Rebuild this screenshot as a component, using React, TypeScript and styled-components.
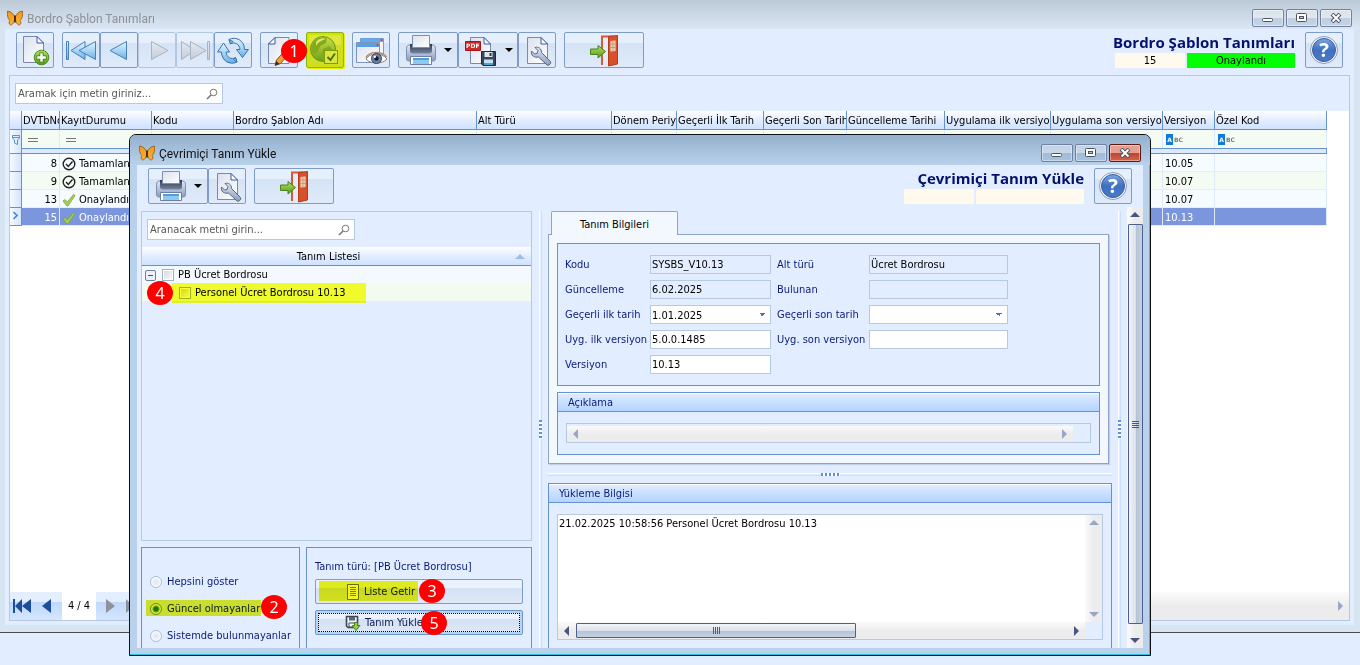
import React from "react";
import styled, { createGlobalStyle, css } from "styled-components";

const UI = '"DejaVu Sans Condensed", "DejaVu Sans", sans-serif';
const CAPTION = 'Roboto, "Open Sans", sans-serif';
const HEADING = '"Open Sans", "Noto Sans", sans-serif';
const TITLE = '"Noto Sans", "Open Sans", sans-serif';
const PALE = "#e2eeff";
const LINE = "#b5c9e4";
const BLUE = "#6693cf";
const NAVY = "#0b1a7c";

const Global = createGlobalStyle`
  *, *::before, *::after { box-sizing: border-box; }
  body { margin: 0; background: ${PALE}; font: 11px/18px ${UI}; color: #000; }
  button, input, select, textarea { font: inherit; color: inherit; margin: 0; border-radius: 0; }
`;

/* ---------- icons ---------- */

const Defs = styled.svg`
  position: absolute;
  width: 0;
  height: 0;
`;

const Gradients = () => (
  <Defs aria-hidden="true">
    <defs>
      <linearGradient id="page" x1="0" y1="0" x2="1" y2="1">
        <stop offset="0" stopColor="#dbe1ee" />
        <stop offset="1" stopColor="#ffffff" />
      </linearGradient>
      <linearGradient id="sky" x1="0" y1="0" x2="0" y2="1">
        <stop offset="0" stopColor="#e2f3fd" />
        <stop offset="0.5" stopColor="#a9d6f4" />
        <stop offset="1" stopColor="#69aee3" />
      </linearGradient>
      <linearGradient id="ash" x1="0" y1="0" x2="0" y2="1">
        <stop offset="0" stopColor="#e4eaf2" />
        <stop offset="1" stopColor="#c4ccd8" />
      </linearGradient>
      <linearGradient id="leaf" x1="0" y1="0" x2="0" y2="1">
        <stop offset="0" stopColor="#b5e060" />
        <stop offset="1" stopColor="#519c1c" />
      </linearGradient>
      <linearGradient id="lime" x1="0" y1="0" x2="0" y2="1">
        <stop offset="0" stopColor="#c6e24a" />
        <stop offset="1" stopColor="#6f9f14" />
      </linearGradient>
      <linearGradient id="steel" x1="0" y1="0" x2="0" y2="1">
        <stop offset="0" stopColor="#dfe7f5" />
        <stop offset="1" stopColor="#8c9cbd" />
      </linearGradient>
      <linearGradient id="ink" x1="0" y1="0" x2="0" y2="1">
        <stop offset="0" stopColor="#2d3852" />
        <stop offset="1" stopColor="#77859f" />
      </linearGradient>
      <linearGradient id="help" x1="0" y1="0" x2="0" y2="1">
        <stop offset="0" stopColor="#7ba7e2" />
        <stop offset="0.5" stopColor="#3f6fc0" />
        <stop offset="1" stopColor="#4a7cc9" />
      </linearGradient>
      <linearGradient id="wing" x1="0" y1="0" x2="0" y2="1">
        <stop offset="0" stopColor="#f09a1c" />
        <stop offset="1" stopColor="#fbb03a" />
      </linearGradient>
    </defs>
  </Defs>
);

const Butterfly = () => (
  <svg width="16" height="16" viewBox="0 0 16 16" aria-hidden="true">
    <path d="M.6 1C4 1.400 6.800 4 7.800 7.400L7.600 9.400C7 12.600 5.400 15.400 3.200 14.800 1.600 14 2 11.800 2.800 10.600.8 8.600-.2 4.800.6 1Z" fill="url(#wing)" stroke="#8a4a0a" strokeWidth=".7" />
    <path d="M15.400 1C12 1.400 9.200 4 8.200 7.400L8.400 9.400C9 12.600 10.600 15.400 12.800 14.800 14.400 14 14 11.800 13.200 10.600 15.200 8.600 16.200 4.800 15.400 1Z" fill="url(#wing)" stroke="#8a4a0a" strokeWidth=".7" />
    <path d="M8 5.500V12.500" stroke="#3b1d06" strokeWidth="1.600" />
  </svg>
);

const PageShape = () => (
  <>
    <path d="M6.500 3.500H20L26.500 10V29.500H6.500Z" fill="url(#page)" stroke="#7a89ab" />
    <path d="M20 3.500V10H26.500Z" fill="#fff" stroke="#3e57a5" strokeLinejoin="round" />
  </>
);

const NewIcon = () => (
  <svg width="30" height="32" viewBox="0 0 30 32" aria-hidden="true">
    <g transform="translate(-3 -1)"><PageShape /></g>
    <circle cx="21.500" cy="23.500" r="7.300" fill="url(#leaf)" stroke="#4a8a1c" />
    <path d="M21.500 18.500V28.500M16.500 23.500H26.500" stroke="#39780f" strokeWidth="4" />
    <path d="M21.500 19.200V27.800M17.200 23.500H25.800" stroke="#fff" strokeWidth="2.400" />
  </svg>
);

const FirstIcon = () => (
  <svg width="32" height="32" viewBox="0 0 32 32" aria-hidden="true" fill="url(#sky)" stroke="#4680bd" strokeLinejoin="round">
    <path d="M1.500 7.500H3.500V25.500H1.500Z" />
    <path d="M20 7.500V25.500L6 16.500Z" />
    <path d="M30.500 7.500V25.500L14 16.500Z" />
  </svg>
);
const PrevIcon = () => (
  <svg width="32" height="32" viewBox="0 0 32 32" aria-hidden="true">
    <path d="M23.500 7.500V25.500L7 16.500Z" fill="url(#sky)" stroke="#4680bd" strokeLinejoin="round" />
  </svg>
);
const NextIcon = () => (
  <svg width="32" height="32" viewBox="0 0 32 32" aria-hidden="true">
    <path d="M10.500 7.500V25.500L27 16.500Z" fill="url(#ash)" stroke="#a9b2c0" strokeLinejoin="round" />
  </svg>
);
const LastIcon = () => (
  <svg width="32" height="32" viewBox="0 0 32 32" aria-hidden="true" fill="url(#ash)" stroke="#a9b2c0" strokeLinejoin="round">
    <path d="M2.500 7.500V25.500L16 16.500Z" />
    <path d="M11.500 7.500V25.500L27 16.500Z" />
    <path d="M28.500 7.500H30.500V25.500H28.500Z" />
  </svg>
);

const RefreshIcon = () => (
  <svg width="34" height="32" viewBox="0 0 34 32" aria-hidden="true" fill="url(#sky)" stroke="#3573b3" strokeLinejoin="round">
    <path d="M13 5.500C20 2 28.500 6.500 28.500 15.500H32.500L26.500 23.500 20.500 15.500H24C23.500 10 18.500 7.500 14.500 10Z" />
    <path d="M21 28C14 31.500 5.500 27 5.500 18H1.500L7.500 9 13.500 18H10C10.500 23.500 15.500 26 19.500 23.500Z" />
    <path d="M13 5.500 17 7.500 14.500 10ZM21 28 17.500 25.500 19.500 23.500Z" fill="#8fc4ec" />
  </svg>
);

const EditIcon = () => (
  <svg width="32" height="32" viewBox="0 0 32 32" aria-hidden="true">
    <path d="M12 3.500H26V29.500H5.500V10Z" fill="url(#page)" stroke="#7a89ab" />
    <path d="M12 3.500V10H5.500Z" fill="#fff" stroke="#3e57a5" strokeLinejoin="round" />
    <path d="M12 31.500 13.500 26 26 12 29.500 15.500 17.500 29.500Z" fill="#f0a13c" stroke="#8b5414" />
    <path d="M12 31.500 13.200 27 16.500 30Z" fill="#2b2b2b" />
  </svg>
);

const GlobeIcon = () => (
  <svg width="32" height="32" viewBox="0 0 32 32" aria-hidden="true">
    <circle cx="14" cy="15" r="12.500" fill="url(#lime)" stroke="#6c971a" />
    <path d="M4 9C7 4 13 2 18 4L17 9 11 12 9 18 4 20C2 16 2 13 4 9ZM14 15 20 12 24 16 20 26 15 27 12 21Z" fill="#84a91a" />
    <path d="M7 8C10 4 14 3.500 17 5 13 6 9 8 7 12Z" fill="#e0ee6a" opacity=".9" />
    <rect x="15.500" y="16.500" width="13" height="13" fill="#dbe53c" stroke="#7d9a17" />
    <path d="M18.500 23 21.500 26 26 19.500" fill="none" stroke="#4f7410" strokeWidth="2" />
  </svg>
);

const PreviewIcon = () => (
  <svg width="34" height="32" viewBox="0 0 34 32" aria-hidden="true">
    <path d="M6.500 4.500H29.500V20H6.500Z" fill="#f3f8fe" stroke="#6a9fd8" />
    <path d="M7 5H29V8H7Z" fill="#67aaea" />
    <path d="M26.500 5H28.500V7H26.500Z" fill="#e2482d" />
    <path d="M2.500 8.500H25.500V28.500H2.500Z" fill="url(#page)" stroke="#7a94bd" />
    <path d="M3 9H25V13H3Z" fill="#5b9fe4" />
    <path d="M22.500 10H24.500V12H22.500Z" fill="#e2482d" />
    <path d="M12 25C15 19 28 18 33 25 28 30.500 17 30.500 12 25Z" fill="#fff" stroke="#8b7c82" />
    <path d="M12 23.500C16 17 28 17 32.500 23" fill="none" stroke="#b98a72" strokeWidth="1.600" />
    <circle cx="22.500" cy="24.500" r="5" fill="#6d83a6" stroke="#35465f" />
    <circle cx="22.500" cy="24.500" r="2.200" fill="#10182a" />
    <circle cx="20.800" cy="22.800" r="1.200" fill="#fff" />
  </svg>
);

const PrinterIcon = () => (
  <svg width="32" height="32" viewBox="0 0 32 32" aria-hidden="true">
    <path d="M1.500 14.500C1.500 12 3 11 5 11H27C29 11 30.500 12 30.500 14.500V25C30.500 26 29.500 27 28.500 27H3.500C2.500 27 1.500 26 1.500 25Z" fill="url(#steel)" stroke="#7f8fb2" />
    <path d="M5 10H27V17C27 18.500 26 19.500 24 19.500H8C6 19.500 5 18.500 5 17Z" fill="url(#ink)" />
    <path d="M7.500 1.500H24.500V13.500H7.500Z" fill="url(#page)" stroke="#7f8fb4" />
    <path d="M5.500 22.500H26.500V30.500H5.500Z" fill="#fff" stroke="#6f7fa3" />
    <path d="M8 24H24V30H8Z" fill="#8ccaf4" />
    <path d="M8 24H24V26H8Z" fill="#4f9edc" />
  </svg>
);

const PdfLabel = styled.text`
  font: bold 6px/8px "DejaVu Sans", sans-serif;
  fill: #fff;
`;

const PdfIcon = () => (
  <svg width="34" height="32" viewBox="0 0 34 32" aria-hidden="true">
    <PageShape />
    <path d="M1.500 7.500H16.500V16.500H1.500Z" fill="#cf2a2a" stroke="#a51515" />
    <PdfLabel x="2" y="14">PDF</PdfLabel>
    <path d="M17.500 17.500H31.500V31.500H19L17.500 30Z" fill="#3a465c" stroke="#1f2938" />
    <path d="M20.500 18H28.500V23H20.500Z" fill="#dfe5ef" />
    <path d="M25.500 19H27.500V22H25.500Z" fill="#2c3648" />
    <path d="M20 25.500H29V31H20Z" fill="#c3e2f7" />
    <path d="M20 29H29V31H20Z" fill="#4fa4de" />
  </svg>
);

const SettingsIcon = () => (
  <svg width="32" height="32" viewBox="0 0 32 32" aria-hidden="true">
    <PageShape />
    <path d="M14 13.500C17.500 12.500 20.500 14.500 20.500 18.500L29.500 27.500C30.500 29.500 28 32 26 31L17.500 23C13.500 24 9.500 21.500 10.500 17L13.500 20 16 19.500 17 16.500Z" fill="url(#steel)" stroke="#58657f" strokeLinejoin="round" />
  </svg>
);

const DoorIcon = () => (
  <svg width="32" height="34" viewBox="0 0 32 34" aria-hidden="true">
    <path d="M14.500 3.500H25V31H14.500Z" fill="#e3edfb" />
    <path d="M14 32V3.500H25" fill="none" stroke="#d95a34" strokeWidth="2" />
    <path d="M20.500 3.500 29.500 2.500V31L20.500 33Z" fill="#d84f29" stroke="#b23c18" />
    <path d="M22.500 8 27.500 7.500V18L22.500 18.500Z" fill="#f6e6d2" />
    <path d="M24.200 8V18M25.900 8V18M22.500 11H27.500M22.500 14.500H27.500" stroke="#c49068" strokeWidth=".8" />
    <path d="M2.500 16H10V12.500L17.500 18.500 10 25V21.500H2.500Z" fill="url(#leaf)" stroke="#47841b" strokeLinejoin="round" />
  </svg>
);

const HelpMark = styled.text`
  font: bold 20px/22px ${TITLE};
  fill: #fff;
  text-anchor: middle;
`;

const HelpIcon = () => (
  <svg width="30" height="30" viewBox="0 0 30 30" aria-hidden="true">
    <circle cx="15" cy="15" r="13.500" fill="#f4f7fc" stroke="#8b9abb" />
    <circle cx="15" cy="15" r="11.500" fill="url(#help)" stroke="#3a5c9e" />
    <HelpMark x="15" y="22">?</HelpMark>
  </svg>
);

const SearchIcon = () => (
  <svg width="12" height="12" viewBox="0 0 12 12" aria-hidden="true" fill="none" stroke="#777">
    <circle cx="7.500" cy="4.500" r="3.300" />
    <path d="M5 7 1 11" strokeWidth="1.600" />
  </svg>
);

const DoneIcon = () => (
  <svg width="14" height="14" viewBox="0 0 14 14" aria-hidden="true" fill="none" stroke="#222">
    <circle cx="7" cy="7" r="5.800" strokeWidth="1.400" />
    <path d="M4 7 6.300 9.500 10.500 4.500" strokeWidth="1.400" />
  </svg>
);

const TickIcon = () => (
  <svg width="14" height="14" viewBox="0 0 14 14" aria-hidden="true">
    <path d="M1 8 3 6.500 5.300 9 11.500 1.500 13 2.500 6 13H5Z" fill="#a3cf4e" stroke="#739f2b" strokeWidth=".7" />
  </svg>
);

const FunnelIcon = () => (
  <svg width="8" height="10" viewBox="0 0 8 10" aria-hidden="true" fill="none" stroke="#5b93d8">
    <path d="M.5.500H7.500V3L5.500 5V9.500L2.500 8V5L.5 3ZM.5 2.500H7.500" />
  </svg>
);

const ListIcon = () => (
  <svg width="14" height="16" viewBox="0 0 14 16" aria-hidden="true">
    <path d="M1.500.500H12.500V15.500H1.500Z" fill="#fff" stroke="#6b7280" />
    <path d="M4 3.500H10M4 5.500H10M4 7.500H10M4 9.500H10M4 11.500H10" stroke="#7d8590" />
  </svg>
);

const SaveIcon = () => (
  <svg width="16" height="16" viewBox="0 0 16 16" aria-hidden="true">
    <path d="M1.500 1.500H12.500V12.500H3L1.500 11Z" fill="#eef3fa" stroke="#3b4557" strokeWidth="1.600" />
    <path d="M4 2H10V5.500H4Z" fill="#596579" />
    <path d="M4 8H10V12H4Z" fill="#fff" stroke="#3b4557" />
    <path d="M9.500 7.500H12.500V10.500H15L11 15.500 7 10.500H9.500Z" fill="#8bd045" stroke="#4a861c" />
  </svg>
);

const Arrow = ({ dir, color = "#47567f" }: { dir: "up" | "down" | "left" | "right"; color?: string }) => {
  const paths = {
    up: "M0 7 5 2 10 7Z",
    down: "M0 3 5 8 10 3Z",
    left: "M7 0 2 5 7 10Z",
    right: "M3 0 8 5 3 10Z",
  };
  return (
    <svg width="10" height="10" viewBox="0 0 10 10" aria-hidden="true">
      <path d={paths[dir]} fill={color} />
    </svg>
  );
};

/* ---------- windows ---------- */

const Desktop = styled.div`
  position: relative;
  display: flex;
  flex-direction: column;
  min-height: 100vh;
  padding-bottom: 32px;
`;

const MainWindow = styled.main`
  flex: 1;
  display: flex;
  flex-direction: column;
  border-bottom: 1px solid #4a4a50;
  background: #d7e4f1;
`;

const Dialog = styled.section`
  position: absolute;
  inset: 134px 209px 9px 129px;
  display: flex;
  flex-direction: column;
  overflow: hidden;
  border: 1px solid #111;
  border-radius: 7px 7px 0 0;
  background: #b9d1ea;
  box-shadow: inset -1px -1px 0 #25c4e2;
`;

const TitleBar = styled.header<{ $active?: boolean }>`
  display: flex;
  align-items: center;
  flex: none;
  gap: 4px;
  height: ${(p) => (p.$active ? 30 : 29)}px;
  padding: 6px ${(p) => (p.$active ? 9 : 8)}px 0 ${(p) => (p.$active ? 9 : 7)}px;
  font: 12px/18px ${CAPTION};
  color: ${(p) => (p.$active ? "#111" : "#8d9196")};
  background: ${(p) =>
    p.$active
      ? "linear-gradient(#94b0ce, #b9d1ea)"
      : "linear-gradient(#bccad8, #dae6f3)"};
`;

const WindowTitle = styled.h1`
  flex: 1;
  margin: 0;
  padding-top: 2px;
  font: inherit;
`;

const CaptionButtons = styled.div`
  display: flex;
  gap: 2px;
`;

const CaptionButton = styled.button<{ $danger?: boolean }>`
  display: grid;
  place-items: center;
  width: 32px;
  height: 18px;
  padding: 0;
  border: 1px solid ${(p) => (p.$danger ? "#5c1a16" : "#6f83a0")};
  border-radius: 2px;
  background: ${(p) =>
    p.$danger
      ? "linear-gradient(#e4a093 0 50%, #bf4430 50%, #d4644c)"
      : "linear-gradient(rgba(255,255,255,.35) 0 50%, rgba(120,145,180,.18) 50%)"};
  box-shadow: inset 0 0 0 1px rgba(255, 255, 255, 0.4);
`;

const Captions = ({ danger }: { danger?: boolean }) => (
  <CaptionButtons>
    <CaptionButton aria-label="Simge durumuna küçült">
      <svg width="12" height="10" viewBox="0 0 12 10"><rect x=".5" y="5.500" width="10" height="3" rx="1" fill="#fff" stroke="#4b5260" /></svg>
    </CaptionButton>
    <CaptionButton aria-label="Ekranı kapla">
      <svg width="12" height="10" viewBox="0 0 12 10"><rect x=".5" y=".5" width="10" height="8" rx="1" fill="#fff" stroke="#4b5260" /><rect x="3.500" y="3.500" width="4" height="2" fill="#b4c4d8" stroke="#4b5260" /></svg>
    </CaptionButton>
    <CaptionButton $danger={danger} aria-label="Kapat">
      <svg width="12" height="10" viewBox="0 0 12 10"><path d="M2 1 10 9M10 1 2 9" stroke="#4b5260" strokeWidth="4" /><path d="M2.500 1.500 9.500 8.500M9.500 1.500 2.500 8.500" stroke="#fff" strokeWidth="2" /></svg>
    </CaptionButton>
  </CaptionButtons>
);

const WindowBody = styled.div<{ $dialog?: boolean }>`
  flex: 1;
  display: flex;
  flex-direction: column;
  min-height: 0;
  margin: ${(p) => (p.$dialog ? "0 7px 7px" : "0 6px 7px 5px")};
  background: ${PALE};
`;

/* ---------- toolbar ---------- */

const Toolbar = styled.div<{ $tall?: boolean }>`
  display: flex;
  flex: none;
  gap: 8px;
  height: ${(p) => (p.$tall ? 46 : 42)}px;
  padding: 3px 11px 0;
`;

const ToolGroup = styled.div`
  display: flex;
`;

const ToolButton = styled.button<{ $w?: number; $marked?: boolean }>`
  position: relative;
  display: flex;
  align-items: center;
  justify-content: center;
  gap: 7px;
  width: ${(p) => p.$w ?? 38}px;
  height: 36px;
  padding: 0;
  border: 1px solid ${(p) => (p.$marked ? "#8fae1f" : "#7e9cc6")};
  border-radius: 2px;
  background: ${(p) =>
    p.$marked
      ? "linear-gradient(#dfe83a 0 35%, #cfdc28 35%)"
      : "linear-gradient(#e6f0fc 0 30%, #d4e3f5 30%, #e0ebfa)"};
  ${(p) => p.$marked && css`box-shadow: inset 0 0 0 2px #d3e300, 1px 1px 0 #e6ee10;`}
  &:disabled { border-color: #b4c7e0; }
`;

const Caret = styled.span`
  border: 4px solid transparent;
  border-top-color: #000;
  border-bottom: 0;
`;

const Heading = styled.div`
  display: flex;
  flex-direction: column;
  align-items: flex-end;
  margin: 0 2px 0 auto;
`;

const HeadingTitle = styled.h2`
  margin: 0;
  font: bold 15px/21px ${HEADING};
  color: #04116e;
`;

const HeadingCells = styled.div`
  display: flex;
  gap: 2px;
`;

const HeadingCell = styled.span<{ $wide?: boolean; $ok?: boolean }>`
  width: ${(p) => (p.$wide ? 108 : 70)}px;
  height: 15px;
  line-height: 16px;
  text-align: center;
  background: ${(p) => (p.$ok ? "#00ff00" : "#fff9ee")};
`;

const Badge = styled.b<{ $x: number; $y: number }>`
  position: absolute;
  z-index: 2;
  left: ${(p) => p.$x}px;
  top: ${(p) => p.$y}px;
  width: 26px;
  height: 24px;
  border-radius: 50%;
  background: #f00;
  color: #fff;
  font: 16px/24px ${TITLE};
  text-align: center;
`;

const Highlight = styled.span<{ $inset: string; $tone?: string }>`
  position: absolute;
  z-index: 1;
  inset: ${(p) => p.$inset};
  background: ${(p) => p.$tone ?? "#fdff30"};
  mix-blend-mode: multiply;
  pointer-events: none;
`;

/* ---------- shared fields ---------- */

const SearchBox = styled.label`
  display: flex;
  align-items: center;
  flex: none;
  width: 208px;
  height: 21px;
  padding: 0 4px 0 2px;
  border: 1px solid ${LINE};
  background: #fff;
`;

const SearchInput = styled.input`
  flex: 1;
  min-width: 0;
  padding: 0;
  border: 0;
  outline: 0;
  background: none;
  &::placeholder { color: #555; opacity: 1; }
`;

/* ---------- main grid ---------- */

const Panel = styled.div<{ $main?: boolean }>`
  flex: 1;
  display: flex;
  flex-direction: column;
  min-height: 0;
  border: 1px solid ${LINE};
  ${(p) => p.$main && css`margin: 0 4px 4px;`}
`;

const SearchRow = styled.div`
  flex: none;
  padding: 7px 5px;
`;

const GridArea = styled.div`
  flex: 1;
  min-height: 0;
  overflow: hidden;
  background: #fff;
`;

const Table = styled.table`
  width: 1317px;
  table-layout: fixed;
  border-collapse: separate;
  border-spacing: 0;
`;

const clip = css`
  overflow: hidden;
  white-space: nowrap;
  text-align: left;
`;

const HeadCell = styled.th`
  ${clip}
  height: 19px;
  padding: 2px 0 0 1px;
  border-right: 1px solid ${BLUE};
  border-bottom: 1px solid ${BLUE};
  background: linear-gradient(#fdfeff, #deebff 60%, #cfe2ff);
  font-weight: normal;
  line-height: 16px;
`;

const FilterCell = styled.td`
  ${clip}
  height: 18px;
  padding: 0 0 0 3px;
  border-right: 1px solid #dfeaf8;
  background: #f3fbf3;
  line-height: 17px;
  color: #666;
`;

const StripCell = styled.td`
  height: 6px;
  padding: 0;
  border: 1px solid ${BLUE};
  border-left: 0;
  background: #dbe9ff;
`;

const DataRow = styled.tr<{ $tone: "a" | "b" | "selected" }>`
  background: ${(p) => ({ a: "#f6fbff", b: "#f3fbf3", selected: "#7b96dd" })[p.$tone]};
  color: ${(p) => (p.$tone === "selected" ? "#fff" : "#000")};
`;

const DataCell = styled.td<{ $num?: boolean }>`
  ${clip}
  height: 18px;
  padding: 2px 2px 0;
  border-right: 1px solid #dfeaf8;
  border-bottom: 1px solid #e3eefa;
  line-height: 15px;
  ${(p) => p.$num && css`text-align: right;`}
`;

const MarkCell = styled.td`
  ${clip}
  padding: 0 0 0 2px;
  border-right: 1px solid ${BLUE};
  border-bottom: 1px solid ${BLUE};
  background: linear-gradient(90deg, #f6faff, #d3e4ff);
  color: #3f83d8;
  line-height: 16px;
`;

const Status = styled.span`
  display: flex;
  align-items: center;
  gap: 3px;
`;

const Abc = styled.span`
  display: flex;
  align-items: center;
  font: bold 6px/11px "DejaVu Sans", sans-serif;
  color: #7a7a7a;
  & > b {
    width: 7px;
    margin-right: 1px;
    background: #0f7ad8;
    color: #fff;
    text-align: center;
  }
`;

const columns: [string, number][] = [
  ["DVTbNo", 38],
  ["KayıtDurumu", 92],
  ["Kodu", 82],
  ["Bordro Şablon Adı", 243],
  ["Alt Türü", 135],
  ["Dönem Periyodu", 65],
  ["Geçerli İlk Tarih", 87],
  ["Geçerli Son Tarih", 83],
  ["Güncelleme Tarihi", 98],
  ["Uygulama ilk versiyon", 106],
  ["Uygulama son versiyon", 112],
  ["Versiyon", 52],
  ["Özel Kod", 112],
];

const records = [
  { no: 8, state: "Tamamlandı", version: "10.05" },
  { no: 9, state: "Tamamlandı", version: "10.07" },
  { no: 13, state: "Onaylandı", version: "10.07" },
  { no: 15, state: "Onaylandı", version: "10.13" },
];

const Navigator = styled.div`
  display: flex;
  flex: none;
  height: 28px;
`;

const NavPart = styled.div<{ $plain?: boolean }>`
  display: flex;
  align-items: center;
  justify-content: ${(p) => (p.$plain ? "center" : "flex-start")};
  gap: 10px;
  width: ${(p) => (p.$plain ? 34 : 52)}px;
  padding-left: ${(p) => (p.$plain ? 0 : 2)}px;
  background: ${(p) =>
    p.$plain ? "#fff" : "linear-gradient(#e3eeff 0 35%, #c0d8fb 35%, #d5e6ff)"};
`;

const NavButton = styled.button`
  display: flex;
  padding: 0;
  border: 0;
  background: none;
`;

/* ---------- scroll bars ---------- */

const Bar = styled.div<{ $vertical?: boolean }>`
  display: flex;
  flex: 1;
  flex-direction: ${(p) => (p.$vertical ? "column" : "row")};
  align-items: center;
  justify-content: space-between;
  padding: ${(p) => (p.$vertical ? "3px 0" : "0 4px")};
  background: linear-gradient(${(p) => (p.$vertical ? "90deg" : "180deg")}, #fbfbfb, #ececec 50%);
`;

const Thumb = styled.div<{ $vertical?: boolean }>`
  display: grid;
  place-items: center;
  ${(p) =>
    p.$vertical
      ? css`width: 15px; flex: 1; margin: 4px 0 11px;`
      : css`height: 15px; width: 280px; margin: 0 auto 0 4px;`}
  border: 1px solid #4d5f8f;
  border-radius: 1px;
  background: linear-gradient(
    ${(p) => (p.$vertical ? "90deg" : "180deg")},
    #f2f4f8,
    #dce2ea 50%,
    #b3c1d4 50%,
    #c6d1e0
  );
`;

const Grip = styled.span<{ $vertical?: boolean }>`
  width: 7px;
  height: 7px;
  background: repeating-linear-gradient(
    ${(p) => (p.$vertical ? "180deg" : "90deg")},
    #4a5a83 0 1px,
    transparent 1px 2px
  );
`;

/* ---------- dialog content ---------- */

const DialogMain = styled.div`
  flex: 1;
  display: flex;
  min-height: 0;
`;

const Columns = styled.div`
  flex: 1;
  display: flex;
  gap: 6px;
  min-width: 0;
  padding: 4px 6px 0 4px;
`;

const LeftColumn = styled.div`
  display: flex;
  flex: none;
  flex-direction: column;
  gap: 6px;
  width: 391px;
  margin-right: 1px;
`;

const RightColumn = styled.div`
  display: flex;
  flex: 1;
  flex-direction: column;
  min-width: 0;
`;

const Splitter = styled.div<{ $vertical?: boolean }>`
  display: flex;
  flex: none;
  align-items: center;
  justify-content: center;
  ${(p) => (p.$vertical ? css`width: 3px;` : css`height: 3px; margin: 9px 0 7px;`)}
  background: linear-gradient(${(p) => (p.$vertical ? "90deg" : "180deg")}, #fff 0 1px, ${PALE} 1px 2px, #c9dfff 2px);
  &::after {
    content: "";
    ${(p) => (p.$vertical ? css`width: 3px; height: 19px;` : css`width: 19px; height: 3px;`)}
    background: repeating-linear-gradient(
      ${(p) => (p.$vertical ? "180deg" : "90deg")},
      #5c92d8 0 2px,
      #fff 2px 4px
    );
  }
`;

const ScrollColumn = styled.div`
  display: flex;
  width: 16px;
`;

const TreeHeader = styled.div`
  display: flex;
  align-items: center;
  flex: none;
  height: 19px;
  padding: 2px 6px 0 0;
  border-bottom: 1px solid ${BLUE};
  background: linear-gradient(#fdfeff, #deebff 60%, #cfe2ff);
  & > span { flex: 1; text-align: center; }
`;

const TreeRow = styled.div<{ $level: number }>`
  position: relative;
  display: flex;
  align-items: center;
  flex: none;
  gap: 3px;
  height: ${(p) => (p.$level ? 17 : 18)}px;
  padding-left: ${(p) => (p.$level ? 37 : 3)}px;
  background: ${(p) => (p.$level ? "#f2fbf0" : "#f3f9ff")};
`;

const Expander = styled.button`
  width: 11px;
  height: 11px;
  margin-right: 3px;
  padding: 0;
  border: 1px solid #6d7f9c;
  border-radius: 2px;
  background: linear-gradient(#3d4f75, #3d4f75) center / 5px 1px no-repeat, #eef3fb;
`;

const CheckLabel = styled.label`
  display: flex;
  align-items: center;
  gap: 4px;
`;

const Check = styled.input`
  appearance: none;
  width: 12px;
  height: 12px;
  border: 1px solid #9fb0c8;
  background: linear-gradient(135deg, #cfd4da, #fff);
  box-shadow: inset 0 0 0 1px #fff;
`;

const Boxes = styled.div`
  display: flex;
  flex: none;
  gap: 6px;
  height: 101px;
`;

const Box = styled.div<{ $w?: number }>`
  position: relative;
  display: flex;
  flex-direction: column;
  ${(p) => (p.$w ? css`width: ${p.$w}px;` : css`flex: 1;`)}
  padding: ${(p) => (p.$w ? "24px 4px 0 8px" : "10px 8px 0")};
  border: 1px solid ${BLUE};
  border-bottom: 0;
  color: ${NAVY};
  line-height: 17px;
`;

const RadioLabel = styled.label`
  position: relative;
  display: flex;
  align-items: center;
  flex: none;
  gap: 5px;
  height: 19px;
  margin-bottom: 8px;
`;

const Radio = styled.input`
  appearance: none;
  width: 12px;
  height: 12px;
  border: 1px solid #a8bcd8;
  border-radius: 50%;
  background: radial-gradient(#dfe6f0, #fff);
  box-shadow: inset 0 0 0 1px #fff;
  &:checked { background: radial-gradient(#1e7d1c 0 2px, #e6f4e0 4px); border-color: #7b93a0; }
`;

const ActionButton = styled.button<{ $focused?: boolean }>`
  position: relative;
  display: flex;
  align-items: center;
  flex: none;
  gap: 4px;
  width: 100%;
  height: 25px;
  margin-top: ${(p) => (p.$focused ? 6 : 4)}px;
  padding: 0 0 0 ${(p) => (p.$focused ? 29 : 30)}px;
  border: 1px solid #7e9cc6;
  border-radius: 2px;
  background: linear-gradient(#eaf2fd 0 35%, #d3e1f3 35%, #dfe9f7);
  color: #101a4c;
  ${(p) =>
    p.$focused &&
    css`
      border-color: #6c95c8;
      box-shadow: inset 0 0 0 2px #b7d3f2;
      outline: 1px dotted #000;
      outline-offset: -4px;
    `}
`;

const Tab = styled.button`
  position: relative;
  z-index: 1;
  flex: none;
  width: 127px;
  height: 24px;
  margin: 0 0 -1px 3px;
  padding: 2px 0 0;
  border: 1px solid #8fa3cc;
  border-bottom: 0;
  border-radius: 2px 2px 0 0;
  background: #f3f8ff;
`;

const TabBody = styled.div`
  display: flex;
  flex: none;
  flex-direction: column;
  gap: 6px;
  margin-right: 3px;
  padding: 8px;
  border: 1px solid #8fa3cc;
  background: #f3f8ff;
  box-shadow: 1px 1px 1px #c0cfe6;
`;

const Group = styled.section<{ $open?: boolean }>`
  display: flex;
  flex-direction: column;
  min-height: 0;
  border: 1px solid ${BLUE};
  background: ${PALE};
  ${(p) => p.$open && css`flex: 1; border-bottom: 0;`}
`;

const GroupTitle = styled.h3`
  flex: none;
  height: 19px;
  margin: 0;
  padding-left: 10px;
  border-bottom: 1px solid ${BLUE};
  background: linear-gradient(#fff 0 1px, #deecff 1px, #b3d3ff);
  color: ${NAVY};
  font: inherit;
  line-height: 20px;
`;

const GroupBody = styled.div`
  display: flex;
  flex: 1;
  flex-direction: column;
  min-height: 0;
  padding: 11px 8px 8px;
`;

const ScrollBox = styled.div`
  display: flex;
  height: 20px;
  margin-bottom: 3px;
  padding: 2px 17px 0 0;
  border: 1px solid ${LINE};
`;

const Form = styled.div`
  display: grid;
  grid-template-columns: 79px 121px 86px 139px;
  gap: 6px;
  padding: 11px 7px;
  color: ${NAVY};
  line-height: 19px;
  white-space: nowrap;
`;

const field = css<{ $locked?: boolean }>`
  width: 100%;
  height: 19px;
  padding: 0 1px;
  border: 1px solid ${LINE};
  outline: 0;
  background-color: ${(p) => (p.$locked ? PALE : "#fff")};
  color: #000;
`;

const Field = styled.input<{ $locked?: boolean }>`
  ${field}
`;

const SelectField = styled.select<{ $locked?: boolean }>`
  ${field}
  appearance: none;
  background-image: linear-gradient(45deg, transparent 50%, #4777ad 50%), linear-gradient(-45deg, transparent 50%, #4777ad 50%);
  background-position: right 8px top 7px, right 5px top 7px;
  background-size: 3px 3px;
  background-repeat: no-repeat;
`;

const Memo = styled.div`
  flex: 1;
  display: flex;
  flex-direction: column;
  min-height: 0;
  border: 1px solid ${LINE};
`;

const MemoRow = styled.div<{ $grow?: boolean }>`
  display: flex;
  ${(p) => (p.$grow ? css`flex: 1; min-height: 0;` : css`height: 17px; flex: none; padding-right: 17px;`)}
`;

const MemoText = styled.textarea`
  flex: 1;
  min-width: 0;
  padding: 0 1px;
  border: 0;
  outline: 0;
  resize: none;
  overflow: hidden;
  white-space: pre;
  background: #fff;
`;

const MemoScroll = styled.div`
  display: flex;
  width: 17px;
`;

const StatusText = ({ state }: { state: string }) => (
  <Status>
    {state === "Onaylandı" ? <TickIcon /> : <DoneIcon />}
    {state}
  </Status>
);

const AbcMark = () => (
  <Abc>
    <b>A</b>BC
  </Abc>
);

const RecordGrid = () => (
  <Table>
    <colgroup>
      <col style={{ width: 12 }} />
      {columns.map(([name, width]) => (
        <col key={name} style={{ width }} />
      ))}
    </colgroup>
    <thead>
      <tr>
        <HeadCell aria-label="Satır" />
        {columns.map(([name]) => (
          <HeadCell key={name} scope="col">{name}</HeadCell>
        ))}
      </tr>
    </thead>
    <tbody>
      <tr>
        <MarkCell rowSpan={2}><FunnelIcon /></MarkCell>
        {columns.map(([name], i) => (
          <FilterCell key={name}>
            {i < 2 && (
              <svg width="14" height="5" viewBox="0 0 14 5" aria-hidden="true">
                <path d="M3 .5H13M3 3.500H13" stroke="#777" />
              </svg>
            )}
            {i > 10 && <AbcMark />}
          </FilterCell>
        ))}
      </tr>
      <tr>
        <StripCell colSpan={13} />
      </tr>
      {records.map((r, i) => (
        <DataRow key={r.no} $tone={i === 3 ? "selected" : i % 2 ? "b" : "a"}>
          <MarkCell>
            {i === 3 && (
              <svg width="7" height="9" viewBox="0 0 7 9" aria-hidden="true">
                <path d="M1.500 1 5 4.500 1.500 8" fill="none" stroke="#3f83d8" strokeWidth="1.600" />
              </svg>
            )}
          </MarkCell>
          <DataCell $num>{r.no}</DataCell>
          <DataCell><StatusText state={r.state} /></DataCell>
          {columns.slice(2, 11).map(([name]) => <DataCell key={name} />)}
          <DataCell>{r.version}</DataCell>
          <DataCell />
        </DataRow>
      ))}
    </tbody>
  </Table>
);

const OnlineDialog = () => (
  <Dialog aria-label="Çevrimiçi Tanım Yükle">
    <TitleBar $active>
      <Butterfly />
      <WindowTitle>Çevrimiçi Tanım Yükle</WindowTitle>
      <Captions danger />
    </TitleBar>
    <WindowBody $dialog>
      <Toolbar>
        <ToolGroup>
          <ToolButton $w={60} aria-label="Yazdır"><PrinterIcon /><Caret /></ToolButton>
          <ToolButton aria-label="Ayarlar"><SettingsIcon /></ToolButton>
        </ToolGroup>
        <ToolButton $w={80} aria-label="Çıkış"><DoorIcon /></ToolButton>
        <Heading>
          <HeadingTitle>Çevrimiçi Tanım Yükle</HeadingTitle>
          <HeadingCells>
            <HeadingCell />
            <HeadingCell $wide />
          </HeadingCells>
        </Heading>
        <ToolButton aria-label="Yardım"><HelpIcon /></ToolButton>
      </Toolbar>
      <DialogMain>
        <Columns>
          <LeftColumn>
            <Panel>
              <SearchRow>
                <SearchBox>
                  <SearchInput aria-label="Ara" placeholder="Aranacak metni girin..." />
                  <SearchIcon />
                </SearchBox>
              </SearchRow>
              <TreeHeader>
                <span>Tanım Listesi</span>
                <Arrow dir="up" color="#9cbdeb" />
              </TreeHeader>
              <TreeRow $level={0}>
                <Expander aria-label="Daralt" />
                <CheckLabel><Check type="checkbox" />PB Ücret Bordrosu</CheckLabel>
              </TreeRow>
              <TreeRow $level={1}>
                <CheckLabel><Check type="checkbox" />Personel Ücret Bordrosu 10.13</CheckLabel>
                <Highlight $inset="-1px 165px -2px 30px" />
                <Badge $x={5} $y={-3}>4</Badge>
              </TreeRow>
            </Panel>
            <Boxes>
              <Box $w={159}>
                <RadioLabel><Radio type="radio" name="filter" />Hepsini göster</RadioLabel>
                <RadioLabel>
                  <Radio type="radio" name="filter" defaultChecked />Güncel olmayanlar
                  <Highlight $inset="1px 34px 2px -4px" $tone="#e4ee30" />
                  <Badge $x={111} $y={-4}>2</Badge>
                </RadioLabel>
                <RadioLabel><Radio type="radio" name="filter" />Sistemde bulunmayanlar</RadioLabel>
              </Box>
              <Box>
                Tanım türü: [PB Ücret Bordrosu]
                <ActionButton>
                  <ListIcon />Liste Getir
                  <Highlight $inset="1px 104px 2px 3px" $tone="#f2f61e" />
                  <Badge $x={103} $y={-1}>3</Badge>
                </ActionButton>
                <ActionButton $focused>
                  <SaveIcon />Tanım Yükle
                  <Badge $x={105} $y={0}>5</Badge>
                </ActionButton>
              </Box>
            </Boxes>
          </LeftColumn>
          <Splitter $vertical />
          <RightColumn>
            <Tab role="tab" aria-selected="true">Tanım Bilgileri</Tab>
            <TabBody>
              <Group>
                <Form>
                  <label htmlFor="code">Kodu</label>
                  <Field id="code" $locked readOnly value="SYSBS_V10.13" />
                  <label htmlFor="subtype">Alt türü</label>
                  <Field id="subtype" $locked readOnly value="Ücret Bordrosu" />
                  <label htmlFor="updated">Güncelleme</label>
                  <Field id="updated" $locked readOnly value="6.02.2025" />
                  <label htmlFor="found">Bulunan</label>
                  <Field id="found" $locked readOnly />
                  <label htmlFor="from">Geçerli ilk tarih</label>
                  <SelectField id="from"><option>1.01.2025</option></SelectField>
                  <label htmlFor="until">Geçerli son tarih</label>
                  <SelectField id="until"><option></option></SelectField>
                  <label htmlFor="minver">Uyg. ilk versiyon</label>
                  <Field id="minver" defaultValue="5.0.0.1485" />
                  <label htmlFor="maxver">Uyg. son versiyon</label>
                  <Field id="maxver" />
                  <label htmlFor="version">Versiyon</label>
                  <Field id="version" defaultValue="10.13" />
                </Form>
              </Group>
              <Group>
                <GroupTitle>Açıklama</GroupTitle>
                <GroupBody>
                  <ScrollBox>
                    <Bar>
                      <Arrow dir="left" color="#98a5c6" />
                      <Arrow dir="right" color="#98a5c6" />
                    </Bar>
                  </ScrollBox>
                </GroupBody>
              </Group>
            </TabBody>
            <Splitter />
            <Group $open>
              <GroupTitle>Yükleme Bilgisi</GroupTitle>
              <GroupBody>
                <Memo>
                  <MemoRow $grow>
                    <MemoText
                      aria-label="Yükleme Bilgisi"
                      readOnly
                      value="21.02.2025 10:58:56 Personel Ücret Bordrosu 10.13"
                    />
                    <MemoScroll>
                      <Bar $vertical>
                        <Arrow dir="up" color="#98a5c6" />
                        <Arrow dir="down" color="#98a5c6" />
                      </Bar>
                    </MemoScroll>
                  </MemoRow>
                  <MemoRow>
                    <Bar>
                      <Arrow dir="left" />
                      <Thumb><Grip /></Thumb>
                      <Arrow dir="right" />
                    </Bar>
                  </MemoRow>
                </Memo>
              </GroupBody>
            </Group>
          </RightColumn>
          <Splitter $vertical />
        </Columns>
        <ScrollColumn>
          <Bar $vertical>
            <Arrow dir="up" />
            <Thumb $vertical><Grip $vertical /></Thumb>
            <Arrow dir="down" />
          </Bar>
        </ScrollColumn>
      </DialogMain>
    </WindowBody>
  </Dialog>
);

export default function App() {
  return (
    <Desktop>
      <Global />
      <Gradients />
      <MainWindow>
        <TitleBar>
          <Butterfly />
          <WindowTitle>Bordro Şablon Tanımları</WindowTitle>
          <Captions />
        </TitleBar>
        <WindowBody>
          <Toolbar $tall>
            <ToolButton aria-label="Yeni"><NewIcon /></ToolButton>
            <ToolGroup>
              <ToolButton aria-label="İlk"><FirstIcon /></ToolButton>
              <ToolButton aria-label="Önceki"><PrevIcon /></ToolButton>
              <ToolButton aria-label="Sonraki" disabled><NextIcon /></ToolButton>
              <ToolButton aria-label="Son" disabled><LastIcon /></ToolButton>
              <ToolButton aria-label="Yenile"><RefreshIcon /></ToolButton>
            </ToolGroup>
            <ToolButton aria-label="Düzenle"><EditIcon /><Badge $x={20} $y={6}>1</Badge></ToolButton>
            <ToolButton $marked aria-label="Çevrimiçi yükle"><GlobeIcon /></ToolButton>
            <ToolButton aria-label="Önizle"><PreviewIcon /></ToolButton>
            <ToolGroup>
              <ToolButton $w={60} aria-label="Yazdır"><PrinterIcon /><Caret /></ToolButton>
              <ToolButton $w={60} aria-label="PDF kaydet"><PdfIcon /><Caret /></ToolButton>
              <ToolButton aria-label="Ayarlar"><SettingsIcon /></ToolButton>
            </ToolGroup>
            <ToolButton $w={80} aria-label="Çıkış"><DoorIcon /></ToolButton>
            <Heading>
              <HeadingTitle>Bordro Şablon Tanımları</HeadingTitle>
              <HeadingCells>
                <HeadingCell>15</HeadingCell>
                <HeadingCell $wide $ok>Onaylandı</HeadingCell>
              </HeadingCells>
            </Heading>
            <ToolButton aria-label="Yardım"><HelpIcon /></ToolButton>
          </Toolbar>
          <Panel $main>
            <SearchRow>
              <SearchBox>
                <SearchInput aria-label="Ara" placeholder="Aramak için metin giriniz..." />
                <SearchIcon />
              </SearchBox>
            </SearchRow>
            <GridArea><RecordGrid /></GridArea>
            <Navigator>
              <NavPart>
                <NavButton aria-label="İlk kayıt">
                  <svg width="20" height="14" viewBox="0 0 20 14"><path d="M1 0H3V14H1ZM10 0V14L3 7ZM19 0V14L10 7Z" fill="#1b4f9b" /></svg>
                </NavButton>
                <NavButton aria-label="Önceki kayıt">
                  <svg width="10" height="14" viewBox="0 0 10 14"><path d="M9 0V14L0 7Z" fill="#1b4f9b" /></svg>
                </NavButton>
              </NavPart>
              <NavPart $plain>4 / 4</NavPart>
              <NavPart>
                <NavButton aria-label="Sonraki kayıt">
                  <svg width="18" height="14" viewBox="0 0 18 14"><path d="M8 0V14L17 7Z" fill="#8d929b" /></svg>
                </NavButton>
                <NavButton aria-label="Son kayıt">
                  <svg width="18" height="14" viewBox="0 0 18 14"><path d="M0 0V14L7 7ZM8 0V14L15 7ZM16 0H18V14H16Z" fill="#8d929b" /></svg>
                </NavButton>
              </NavPart>
              <Bar>
                <span />
                <Arrow dir="right" color="#98a5c6" />
              </Bar>
            </Navigator>
          </Panel>
        </WindowBody>
      </MainWindow>
      <OnlineDialog />
    </Desktop>
  );
}
